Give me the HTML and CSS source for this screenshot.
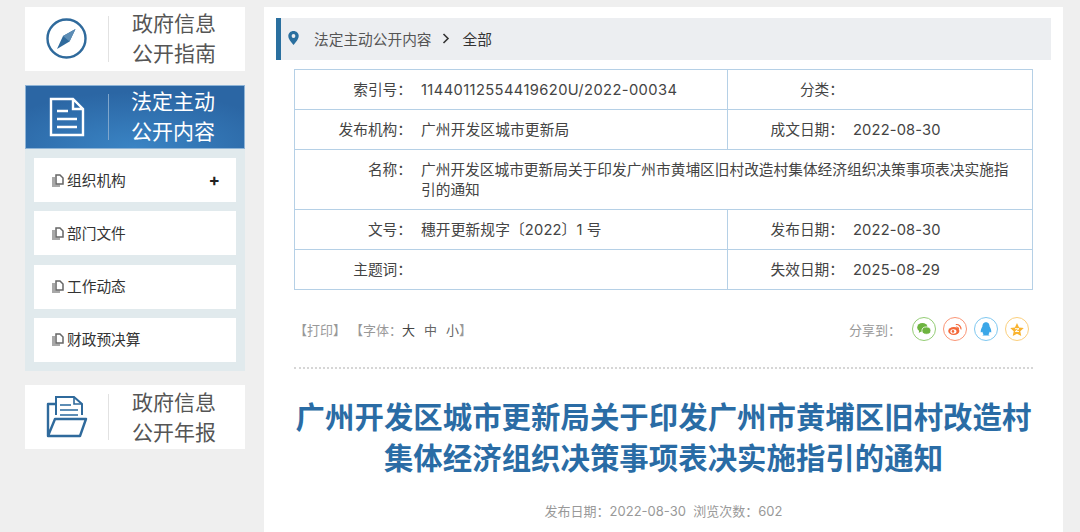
FILE: index.html
```html
<!DOCTYPE html>
<html lang="zh-CN">
<head>
    <meta charset="UTF-8">
    <meta name="viewport" content="width=device-width, initial-scale=1.0">
    <title>法定主动公开内容</title>
    <link rel="stylesheet" href="styles.css">
</head>
<body>
    <div class="page">
        <aside class="sidebar">
            <a class="side-card">
                <span class="side-icon">
                    <svg width="42" height="42" viewBox="0 0 42 42">
                        <circle cx="20.5" cy="20.5" r="19" fill="none" stroke="#2f6a9c" stroke-width="2.4"/>
                        <path d="M29.5 11 L23.5 23.5 L11 31 L17 18 Z" fill="#2f6a9c"/>
                        <path d="M29.5 11 L17 18 L23.5 23.5 Z" fill="#5d8db5"/>
                    </svg>
                </span>
                <span class="side-title">政府信息<br>公开指南</span>
            </a>
            <a class="side-card active">
                <span class="side-icon">
                    <svg width="36" height="40" viewBox="0 0 36 40">
                        <path d="M2 2 H24 L34 12 V38 H2 Z M24 2 V12 H34" fill="none" stroke="#fff" stroke-width="2.4"/>
                        <path d="M8 14 H19 M8 22 H28 M8 30 H28" fill="none" stroke="#fff" stroke-width="2.4"/>
                    </svg>
                </span>
                <span class="side-title">法定主动<br>公开内容</span>
            </a>
            <ul class="side-menu">
                <li class="menu-item">
                    <svg class="menu-icon" width="12" height="13" viewBox="0 0 12 13">
                        <path d="M0 3 H3 V10.5 H8 V13 H0 Z" fill="#a8a8a8"/>
                        <path d="M4 1 H8 L11 4 V10 H4 Z" fill="#fff" stroke="#666" stroke-width="1.5"/>
                    </svg>
                    <span class="menu-text">组织机构</span>
                    <span class="menu-plus">+</span>
                </li>
                <li class="menu-item">
                    <svg class="menu-icon" width="12" height="13" viewBox="0 0 12 13">
                        <path d="M0 3 H3 V10.5 H8 V13 H0 Z" fill="#a8a8a8"/>
                        <path d="M4 1 H8 L11 4 V10 H4 Z" fill="#fff" stroke="#666" stroke-width="1.5"/>
                    </svg>
                    <span class="menu-text">部门文件</span>
                </li>
                <li class="menu-item">
                    <svg class="menu-icon" width="12" height="13" viewBox="0 0 12 13">
                        <path d="M0 3 H3 V10.5 H8 V13 H0 Z" fill="#a8a8a8"/>
                        <path d="M4 1 H8 L11 4 V10 H4 Z" fill="#fff" stroke="#666" stroke-width="1.5"/>
                    </svg>
                    <span class="menu-text">工作动态</span>
                </li>
                <li class="menu-item">
                    <svg class="menu-icon" width="12" height="13" viewBox="0 0 12 13">
                        <path d="M0 3 H3 V10.5 H8 V13 H0 Z" fill="#a8a8a8"/>
                        <path d="M4 1 H8 L11 4 V10 H4 Z" fill="#fff" stroke="#666" stroke-width="1.5"/>
                    </svg>
                    <span class="menu-text">财政预决算</span>
                </li>
            </ul>
            <a class="side-card last">
                <span class="side-icon">
                    <svg width="42" height="44" viewBox="0 0 42 44">
                        <path d="M10 20 V2 H28 L36 9 V20" fill="none" stroke="#2f6a9c" stroke-width="2"/>
                        <path d="M28 2 V9 H36" fill="none" stroke="#2f6a9c" stroke-width="1.6"/>
                        <path d="M14 10 H25 M14 15 H32 M14 20 H32" fill="none" stroke="#5d8db5" stroke-width="1.8"/>
                        <path d="M10 9 H2 V41 H34 L40 24 H9 L2 41" fill="none" stroke="#2f6a9c" stroke-width="2.4" stroke-linejoin="round"/>
                    </svg>
                </span>
                <span class="side-title">政府信息<br>公开年报</span>
            </a>
        </aside>
        <main class="content">
            <div class="crumb">
                <svg class="crumb-pin" width="11" height="14" viewBox="0 0 11 14">
                    <path d="M5.5 0 C2.5 0 0.3 2.2 0.3 5 C0.3 8.5 5.5 14 5.5 14 C5.5 14 10.7 8.5 10.7 5 C10.7 2.2 8.5 0 5.5 0 Z" fill="#2a6f9f"/>
                    <circle cx="5.5" cy="5" r="1.9" fill="#eceef1"/>
                </svg>
                <span class="crumb-parent">法定主动公开内容</span>
                <svg class="crumb-arrow" width="8" height="11" viewBox="0 0 8 11">
                    <path d="M1.5 1 L6 5.5 L1.5 10" fill="none" stroke="#333" stroke-width="1.6"/>
                </svg>
                <span class="crumb-current">全部</span>
            </div>
            <div class="meta">
                <div class="row">
                    <div class="cell left"><span class="label">索引号：</span><span class="value num">11440112554419620U/2022-00034</span></div>
                    <div class="cell right"><span class="label">分类：</span><span class="value"></span></div>
                </div>
                <div class="row">
                    <div class="cell left"><span class="label">发布机构：</span><span class="value">广州开发区城市更新局</span></div>
                    <div class="cell right"><span class="label">成文日期：</span><span class="value">2022-08-30</span></div>
                </div>
                <div class="row tall">
                    <div class="cell wide"><span class="label">名称：</span><span class="value">广州开发区城市更新局关于印发广州市黄埔区旧村改造村集体经济组织决策事项表决实施指引的通知</span></div>
                </div>
                <div class="row">
                    <div class="cell left"><span class="label">文号：</span><span class="value">穗开更新规字〔2022〕1 号</span></div>
                    <div class="cell right"><span class="label">发布日期：</span><span class="value">2022-08-30</span></div>
                </div>
                <div class="row">
                    <div class="cell left"><span class="label">主题词：</span><span class="value"></span></div>
                    <div class="cell right"><span class="label">失效日期：</span><span class="value">2025-08-29</span></div>
                </div>
            </div>
            <div class="tools">
                <div class="tools-left">
                    <span class="tool">【打印】</span>
                    <span class="tool">【字体：<b class="size-big">大</b><b class="size">中</b><b class="size last-size">小</b>】</span>
                </div>
                <div class="share">
                    <span class="share-label">分享到：</span>
                    <span class="share-btn wechat">
                        <svg width="18" height="16" viewBox="0 0 18 16">
                            <ellipse cx="7" cy="6" rx="6.5" ry="5.4" fill="#6db33f"/>
                            <path d="M3 9 L2.5 13 L7 10 Z" fill="#6db33f"/>
                            <ellipse cx="12" cy="10" rx="5.6" ry="4.6" fill="#6db33f" stroke="#fff" stroke-width="1"/>
                        </svg>
                    </span>
                    <span class="share-btn weibo">
                        <svg width="18" height="16" viewBox="0 0 18 16">
                            <ellipse cx="7.5" cy="10.5" rx="7" ry="5" fill="#f4693a"/>
                            <ellipse cx="7" cy="11" rx="3.8" ry="2.8" fill="#fff"/>
                            <circle cx="6.5" cy="11" r="1.6" fill="#f4693a"/>
                            <path d="M10 2.5 A5.5 5.5 0 0 1 16.5 8.5 M10.5 5.5 A2.8 2.8 0 0 1 13.5 8" fill="none" stroke="#f4693a" stroke-width="1.5"/>
                        </svg>
                    </span>
                    <span class="share-btn qq">
                        <svg width="16" height="18" viewBox="0 0 16 18">
                            <path d="M8 0.5 C4.5 0.5 3.5 3.5 3.5 6 C2 8.5 1 11 1.5 13.5 L3.5 12.5 C3.8 14 4 15 5 15.5 L3.5 17 H12.5 L11 15.5 C12 15 12.2 14 12.5 12.5 L14.5 13.5 C15 11 14 8.5 12.5 6 C12.5 3.5 11.5 0.5 8 0.5 Z" fill="#3ba7e8"/>
                        </svg>
                    </span>
                    <span class="share-btn star">
                        <svg width="18" height="17" viewBox="0 0 18 17">
                            <path d="M9 0.5 L11.6 6 L17.5 6.7 L13.1 10.8 L14.3 16.6 L9 13.7 L3.7 16.6 L4.9 10.8 L0.5 6.7 L6.4 6 Z" fill="#f9b32f"/>
                            <path d="M6.5 7.5 H11.5 L6.8 11 H11.5" fill="none" stroke="#fff" stroke-width="1.2"/>
                        </svg>
                    </span>
                </div>
            </div>
            <div class="article-head">
                <h1 class="article-title">广州开发区城市更新局关于印发广州市黄埔区旧村改造村<br>集体经济组织决策事项表决实施指引的通知</h1>
                <p class="article-info">发布日期：2022-08-30&nbsp;&nbsp;浏览次数：602</p>
            </div>
        </main>
    </div>
</body>
</html>
```

FILE: styles.css
```css
html, body {
    margin: 0;
    padding: 0;
    height: 532px;
    overflow: hidden;
}

body {
    background-color: #efefef;
    font-family: Inter, "Noto Sans CJK SC", sans-serif;
    color: #333;
}

.page {
    display: flex;
    align-items: flex-start;
    padding: 7px 0 0 25px;
}

.sidebar {
    width: 220px;
    flex-shrink: 0;
}

.side-card {
    display: flex;
    align-items: center;
    height: 64px;
    background-color: #fff;
    margin-bottom: 14px;
}

.side-card.active {
    background: radial-gradient(ellipse 70% 90% at 50% 100%, #3a84c4 0%, #2b66a4 100%);
    border: 1px solid #8fb4d6;
    box-sizing: border-box;
    margin-bottom: 0;
}

.side-card.last {
    margin-bottom: 0;
}

.side-icon {
    width: 83px;
    height: 46px;
    display: flex;
    align-items: center;
    justify-content: center;
    border-right: 1px solid #e2e2e2;
    flex-shrink: 0;
}

.active .side-icon {
    width: 82px;
    border-right-color: #7fa6cc;
}

.side-title {
    margin-left: 23px;
    font-size: 21px;
    line-height: 30px;
    color: #555;
}

.active .side-title {
    margin-left: 22px;
    color: #fff;
}

.last .side-title {
    padding-top: 2px;
}

.side-menu {
    list-style: none;
    margin: 0 0 14px;
    padding: 9px;
    background-color: #e1eaed;
    display: flex;
    flex-direction: column;
    gap: 9.33px;
}

.menu-item {
    height: 44px;
    background-color: #fff;
    display: flex;
    align-items: center;
    padding: 0 16px 0 18px;
    font-size: 14.7px;
    color: #333;
}

.menu-icon {
    margin-right: 3px;
}

.menu-text {
    flex: 1;
    padding-bottom: 2px;
}

.menu-plus {
    font-size: 17px;
    font-weight: bold;
    color: #222;
}

.content {
    width: 799px;
    height: 525px;
    margin-left: 19px;
    background-color: #fff;
    padding: 11px 12px 0 12px;
    box-sizing: border-box;
}

.crumb {
    height: 42px;
    background-color: #eceef1;
    border-left: 5px solid #2a6f9f;
    display: flex;
    align-items: center;
    padding: 0 0 2px 7px;
    box-sizing: border-box;
    font-size: 14.7px;
}

.crumb-pin {
    margin-right: 15px;
}

.crumb-parent {
    color: #555;
}

.crumb-arrow {
    margin: 0 13px 0 10px;
}

.crumb-current {
    color: #333;
}

.meta {
    margin: 9px 18px 0 18px;
    border: 1px solid #b5d0e6;
    border-bottom: none;
    font-size: 14.7px;
    color: #444;
}

.row {
    display: flex;
    height: 40px;
    border-bottom: 1px solid #b5d0e6;
    box-sizing: border-box;
}

.row.tall {
    height: 60px;
}

.cell {
    display: flex;
    align-items: flex-start;
    padding-top: 10px;
    line-height: 20px;
    box-sizing: border-box;
}

.cell.left {
    width: 433px;
    border-right: 1px solid #b5d0e6;
}

.cell.right {
    flex: 1;
}

.cell.wide {
    flex: 1;
}

.label {
    text-align: right;
    flex-shrink: 0;
}

.left .label,
.wide .label {
    width: 117px;
    margin-right: 9px;
}

.right .label {
    width: 116px;
    margin-right: 9px;
}

.value {
    letter-spacing: 0.15px;
}

.value.num {
    letter-spacing: 0.4px;
}

.wide .value {
    width: 596px;
    letter-spacing: 0;
}

.tools {
    display: flex;
    justify-content: space-between;
    align-items: center;
    margin: 12px 18px 0 18px;
    height: 54px;
    padding-bottom: 11px;
    border-bottom: 2px dotted #d6d6d6;
    font-size: 13px;
    color: #999;
}

.tools-left {
    display: flex;
    gap: 4px;
}

.size-big,
.size {
    font-weight: normal;
    color: #444;
    margin-right: 9px;
}

.size {
    color: #666;
}

.size.last-size {
    margin-right: 0;
}

.share {
    display: flex;
    align-items: center;
    padding-right: 4px;
}

.share-label {
    margin-right: 4px;
}

.share-btn {
    width: 22px;
    height: 22px;
    border-radius: 50%;
    border: 1px solid #999;
    display: flex;
    align-items: center;
    justify-content: center;
    margin-left: 7px;
}

.share-btn svg {
    transform: scale(0.8);
}

.wechat { border-color: #94cd75; }
.weibo { border-color: #fa9677; }
.qq { border-color: #7fc8f0; }
.star { border-color: #fbcf7c; }

.article-head {
    text-align: center;
}

.article-title {
    margin: 28px 0 0;
    font-size: 29.4px;
    letter-spacing: 0.04px;
    line-height: 41px;
    font-weight: bold;
    color: #2a6ca5;
}

.article-info {
    margin: 22px 0 0;
    font-size: 13px;
    color: #999;
}
```
